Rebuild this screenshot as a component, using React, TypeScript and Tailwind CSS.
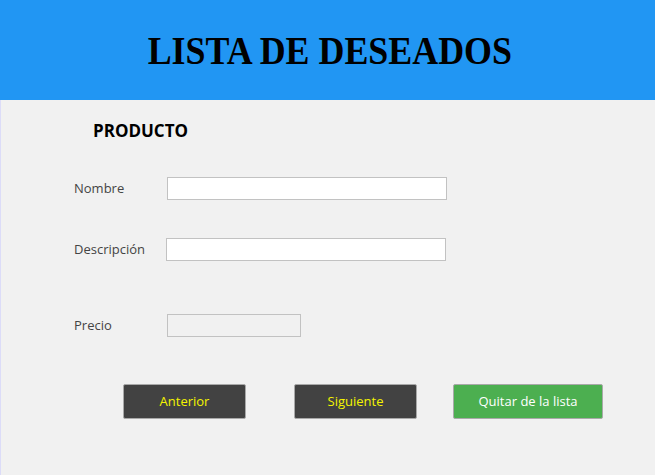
export default function App() {
  return (
    <div className="w-[655px] h-[475px] bg-[#f1f1f1] flex flex-col" style={{ fontFamily: '"Open Sans", "Noto Sans", sans-serif' }}>
      <div className="h-[100px] bg-[#2196f3] flex items-center justify-center">
        <h1 className="text-[39px] leading-[44px] font-bold text-black scale-x-[0.92] pl-[4px] pt-[1px]" style={{ fontFamily: '"Liberation Serif", serif' }}>LISTA DE DESEADOS</h1>
      </div>
      <div className="flex-1 border-l border-[#dcdcf8] pl-[73px]">
        <div className="pl-[19px] pt-[19px] text-[17px] font-bold text-black leading-[24px]">PRODUCTO</div>
        <div className="flex items-center mt-[34px]">
          <span className="w-[93px] shrink-0 text-[13px] text-[#444]">Nombre</span>
          <div className="w-[280px] h-[23px] bg-white border border-[#c2c2c2]" />
        </div>
        <div className="flex items-center mt-[38px]">
          <span className="w-[92px] shrink-0 text-[13px] text-[#444]">Descripción</span>
          <div className="w-[280px] h-[23px] bg-white border border-[#c2c2c2]" />
        </div>
        <div className="flex items-center mt-[53px]">
          <span className="w-[93px] shrink-0 text-[13px] text-[#444]">Precio</span>
          <div className="w-[134px] h-[23px] bg-[#f1f1f1] border border-[#c2c2c2]" />
        </div>
        <div className="flex mt-[47px] ml-[49px]">
          <button className="w-[123px] h-[35px] bg-[#424242] border border-[#a9a9a9] rounded-[2px] text-[13px] text-[#f5f500]">Anterior</button>
          <button className="ml-[48px] w-[123px] h-[35px] bg-[#424242] border border-[#a9a9a9] rounded-[2px] text-[13px] text-[#f5f500]">Siguiente</button>
          <button className="ml-[36px] w-[150px] h-[35px] bg-[#4caf50] border border-[#a9a9a9] rounded-[2px] text-[13px] text-white">Quitar de la lista</button>
        </div>
      </div>
    </div>
  );
}
